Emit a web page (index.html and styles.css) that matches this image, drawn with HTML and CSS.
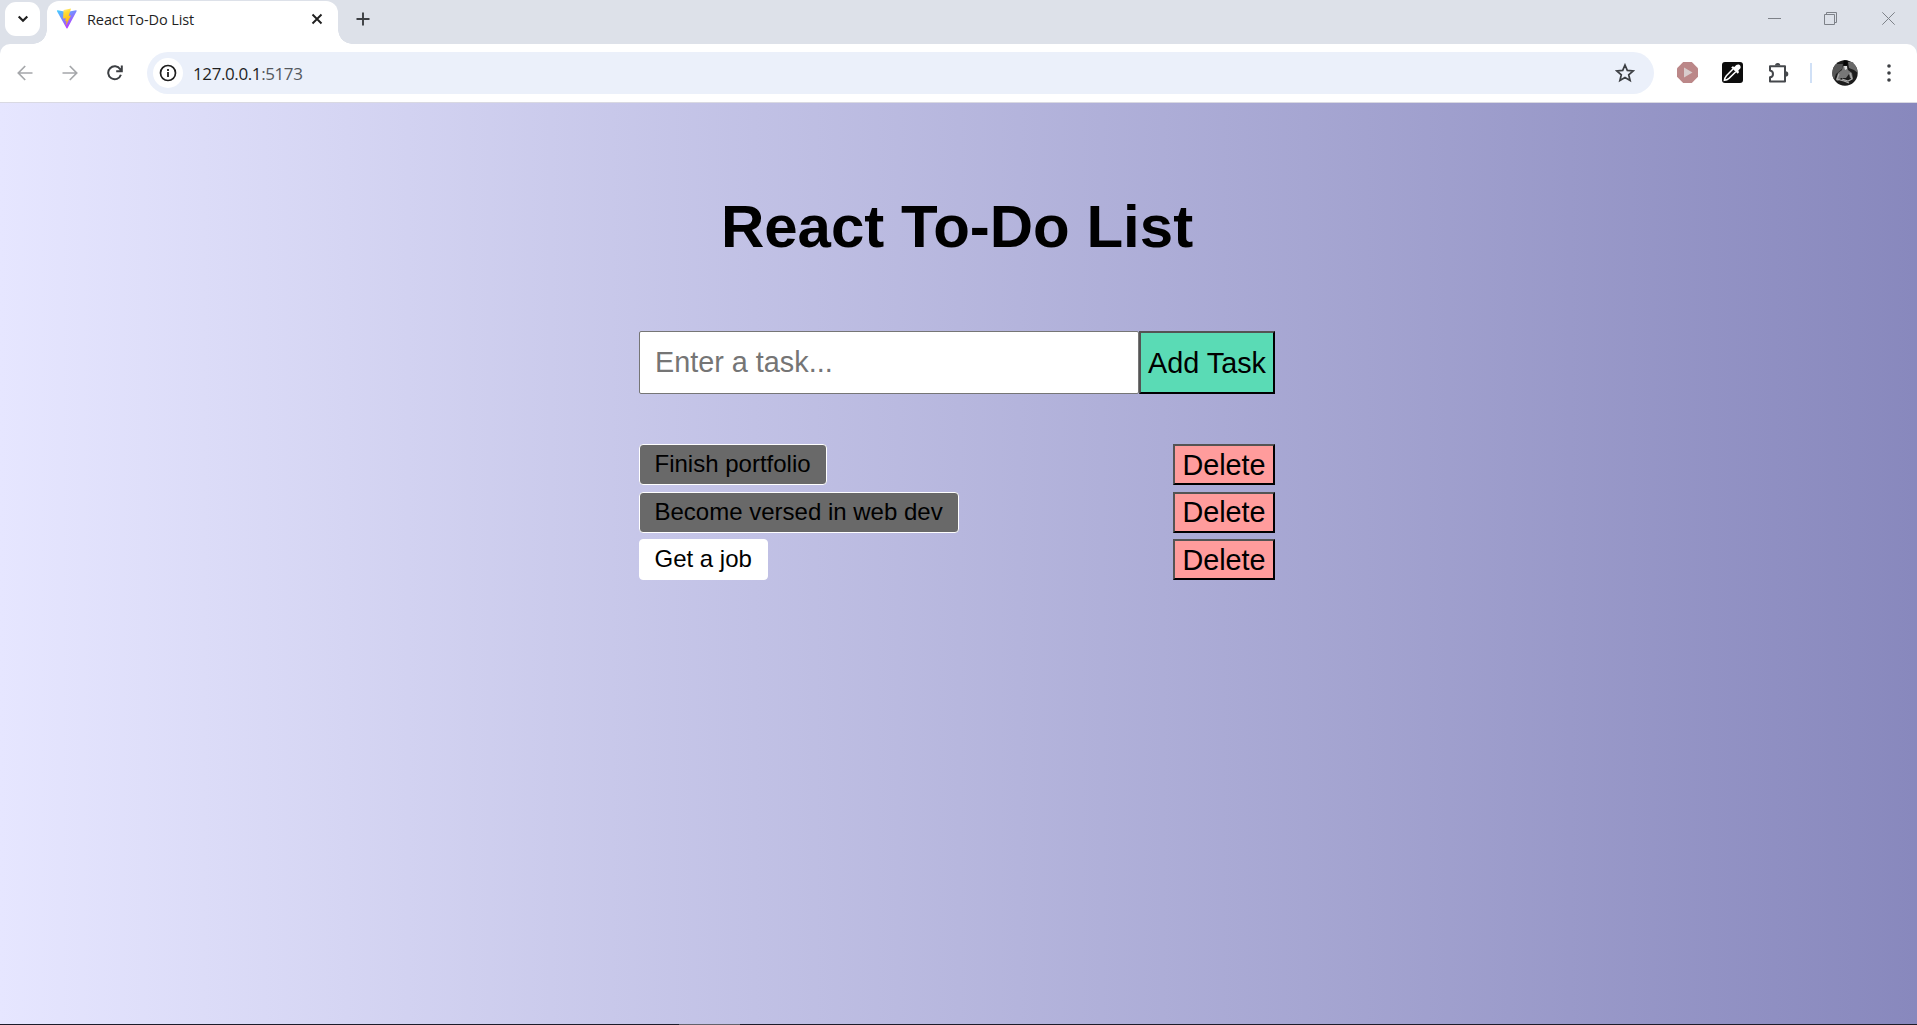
FILE: index.html
```html
<!DOCTYPE html>
<html lang="en">
<head>
<meta charset="utf-8">
<title>React To-Do List</title>
<link rel="stylesheet" href="styles.css">
</head>
<body>
<header class="tabstrip">
  <button class="tab-menu" aria-label="Search tabs">
    <svg width="12" height="8" viewBox="0 0 12 8"><path d="M1.700 1.500 6 5.700l4.300-4.200" fill="none" stroke="#1f1f1f" stroke-width="2.200"/></svg>
  </button>
  <div class="tab">
    <svg class="favicon" width="22" height="22" viewBox="0 0 22 22">
      <defs>
        <linearGradient id="v" x1="0" y1="0" x2="0.6" y2="1"><stop offset="0" stop-color="#41d1ff"/><stop offset="1" stop-color="#bd34fe"/></linearGradient>
        <linearGradient id="b" x1="0.4" y1="0" x2="0.6" y2="1"><stop offset="0" stop-color="#ffea83"/><stop offset=".2" stop-color="#ffdd35"/><stop offset="1" stop-color="#ffa800"/></linearGradient>
      </defs>
      <path d="M20.600 3.200 11.500 20.200a.6.6 0 0 1-1 0L1 3.200a.6.6 0 0 1 .7-.9L11 4l9-1.700a.6.6 0 0 1 .6.9Z" fill="url(#v)"/>
      <path d="m15 .5-7.300 1.500a.4.4 0 0 0-.2.3L7.100 10.300a.3.300 0 0 0 .3.3l2.400-.4-.6 3 1.400-.3-1 5 5.400-10.300-2.300.4L15 .5Z" fill="url(#b)"/>
    </svg>
    <span class="tab-title">React To-Do List</span>
    <svg class="tab-close" width="12" height="12" viewBox="0 0 12 12"><path d="m1.500 1.500 9 9m0-9-9 9" stroke="#1f1f1f" stroke-width="1.900"/></svg>
  </div>
  <svg class="new-tab" width="14" height="14" viewBox="0 0 14 14"><path d="M7 .5v13M.5 7h13" stroke="#3c3f43" stroke-width="1.900"/></svg>
  <div class="window-controls">
    <svg width="13" height="13" viewBox="0 0 13 13"><path d="M0 6.500h13"/></svg>
    <svg width="13" height="13" viewBox="0 0 13 13"><path d="M.5 2.500h10v10H.5zM2.500 2.500v-2h10v10h-2"/></svg>
    <svg width="13" height="13" viewBox="0 0 13 13"><path d="m.3.3 12.400 12.400M12.700.3.3 12.700"/></svg>
  </div>
</header>
<div class="toolbar-back">
<nav class="toolbar">
  <svg class="nav-icon dim" width="16" height="16" viewBox="0 0 16 16"><path d="M15.500 8H1.500M8.200 1 1.300 8l6.900 7"/></svg>
  <svg class="nav-icon dim" width="16" height="16" viewBox="0 0 16 16"><path d="M.5 8h14M7.800 1l6.900 7-6.900 7"/></svg>
  <svg class="nav-icon reload" width="16" height="16" viewBox="0 0 16 16"><path d="M13.900 9.800A6.500 6.500 0 1 1 13.200 4.200L14.500 6M14.800.5v5.700H9.200"/></svg>
  <div class="address">
    <span class="site-info"><svg width="18" height="18" viewBox="0 0 18 18"><circle cx="9" cy="9" r="7.500" fill="none" stroke="#1f1f1f" stroke-width="1.700"/><path d="M9 8v5M9 5v1.900" stroke="#1f1f1f" stroke-width="1.800"/></svg></span>
    <span class="url">127.0.0.1<span class="port">:5173</span></span>
    <svg class="star" width="20" height="20" viewBox="0 0 20 20"><path d="m10 2 2.300 5.400 5.900.5-4.500 3.900 1.400 5.700L10 14.400l-5.100 3.100 1.400-5.700-4.500-3.900 5.900-.5Z" fill="none" stroke="#3c3f43" stroke-width="1.700"/></svg>
  </div>
  <svg class="ext-play" width="21" height="21" viewBox="0 0 21 21"><path d="M6.200 0h8.600L21 6.200v8.600L14.800 21H6.200L0 14.800V6.200Z" fill="#bb8788"/><path d="M7 5.500v10l8.500-5Z" fill="#d8cccc"/></svg>
  <svg class="ext-picker" width="21" height="21" viewBox="0 0 21 21"><rect width="21" height="21" rx="3" fill="#0c0c0c"/><path d="m11 7-6.600 6.800c-1 1.200-1.700 2.600-2 4.500 1.900-.2 3.400-.9 4.600-1.900l6.800-6.600" fill="none" stroke="#fff" stroke-width="1.500"/><path d="m9.200 5.400 1.500-1.200 1.600.7 2-1.900c2.600-1.900 5.500 1 3.900 3.500l-1.900 2 .7 1.800-1.300 1.400Z" fill="#fff"/></svg>
  <svg class="ext-puzzle" width="22" height="22" viewBox="0 0 22 22"><path d="M2 4.200h15v15.300H2v-4.200c4-.6 4-6.200 0-6.800Z" fill="none" stroke="#45484c" stroke-width="2" stroke-linejoin="round"/><path d="M7 3.600a2.700 2.700 0 0 1 5.400 0M17.600 9.200a2.700 2.700 0 0 1 0 5.400" fill="#45484c"/></svg>
  <span class="divider"></span>
  <svg class="avatar" width="26" height="26" viewBox="0 0 26 26">
    <defs><clipPath id="c"><circle cx="13" cy="13" r="12.700"/></clipPath></defs>
    <g clip-path="url(#c)"><path fill="#1c1c1c" d="M0 0h26v26H0z"/><path d="M0 4h11l-1 5-6 5-2 6H0Z" fill="#555"/><path d="M16 2h10v11l-4-3-5-2Z" fill="#6a6a6a"/><path d="m11 6 4 0 1 4 4 3 1 6-3-1-1-4-3 4-5 0-3 3-2-1 2-7 4-3Z" fill="#777"/><path d="m12 6 3 0 0 3-2 1Z" fill="#ddd"/><path d="m7 14-2 5 7 2 5 2M18 13l2 6-4 2-6-2" fill="none" stroke="#aaa" stroke-width="1.300"/><path d="M11.500 0h4v5.500h-4z" fill="#050505"/></g>
  </svg>
  <svg class="kebab" width="4" height="18" viewBox="0 0 4 18"><circle cx="2" cy="2" r="1.800"/><circle cx="2" cy="9" r="1.800"/><circle cx="2" cy="16" r="1.800"/></svg>
</nav>
</div>
<main class="app">
  <h1 class="heading">React To-Do List</h1>
  <form class="task-form">
    <input class="task-input" type="text" placeholder="Enter a task...">
    <button class="add-button" type="button">Add Task</button>
  </form>
  <ul class="task-list">
    <li class="task"><span class="task-name done">Finish portfolio</span><button class="delete-button">Delete</button></li>
    <li class="task"><span class="task-name done">Become versed in web dev</span><button class="delete-button">Delete</button></li>
    <li class="task"><span class="task-name">Get a job</span><button class="delete-button">Delete</button></li>
  </ul>
</main>
<footer class="taskbar-edge"><span class="taskbar-mark"></span></footer>
</body>
</html>
```
FILE: styles.css
```css
* { box-sizing: border-box; }
body {
  margin: 0;
  height: 1025px;
  display: flex;
  flex-direction: column;
  overflow: hidden;
  font-family: "Liberation Sans", Arial, sans-serif;
}
svg { flex: none; display: block; }
button { margin: 0; }

.tabstrip {
  display: flex;
  height: 44px;
  flex: none;
  background: #dde1e9;
  padding-left: 5px;
}
.tab-menu {
  width: 35px;
  height: 34px;
  margin-top: 2px;
  padding: 0;
  border: 0;
  border-radius: 11px;
  background: #fff;
  display: flex;
  align-items: center;
  justify-content: center;
}
.tab {
  position: relative;
  width: 291px;
  height: 43px;
  margin: 1px 0 0 7px;
  padding: 0 15px 7px 9px;
  border-radius: 12px 12px 0 0;
  background: #fff;
  display: flex;
  align-items: center;
}
.tab::before, .tab::after {
  content: "";
  position: absolute;
  bottom: 0;
  width: 14px;
  height: 14px;
}
.tab::before { left: -14px; background: radial-gradient(circle at 0 0, transparent 13.500px, #fff 14px); }
.tab::after { right: -14px; background: radial-gradient(circle at 100% 0, transparent 13.500px, #fff 14px); }
.tab-title {
  flex: 1;
  margin-left: 9px;
  font: 14.500px "Open Sans", "Noto Sans", sans-serif;
  letter-spacing: -0.100px;
  color: #1f1f1f;
  white-space: nowrap;
}
.new-tab { margin: 12px 0 0 18px; }
.window-controls {
  display: flex;
  gap: 44px;
  margin: 12px 22px 0 auto;
  fill: none;
  stroke: #7d8188;
}
.window-controls svg:first-child { margin-right: -1px; }
.window-controls svg:nth-child(2) { margin-right: 1px; }

.toolbar-back { background: #dde1e9; flex: none; }
.toolbar {
  display: flex;
  align-items: center;
  height: 59px;
  padding: 0 26px 1px 17px;
  border-bottom: 1px solid #d9d9e2;
  border-radius: 10px 10px 0 0;
  background: #fff;
}
.nav-icon { fill: none; stroke: #3c3f43; stroke-width: 2; margin-right: 29px; }
.nav-icon.dim { stroke: #a5a7aa; stroke-width: 1.700; }
.nav-icon.reload { margin-right: 24px; }
.address {
  display: flex;
  align-items: center;
  width: 1507px;
  height: 42px;
  padding: 0 19px 0 6px;
  border-radius: 21px;
  background: #ebf0fa;
}
.site-info {
  width: 30px;
  height: 30px;
  border-radius: 50%;
  background: #fff;
  display: flex;
  align-items: center;
  justify-content: center;
}
.url {
  flex: 1;
  padding-top: 1px;
  margin-left: 10px;
  font: 17px "Open Sans", "Noto Sans", sans-serif;
  letter-spacing: -0.400px;
  color: #1f1f1f;
}
.port { color: #54585e; }
.ext-play { margin-left: 23px; }
.ext-picker { margin-left: 24px; }
.ext-puzzle { margin-left: 25px; }
.divider { width: 2px; height: 20px; margin-left: 20px; background: #d0e0f6; }
.avatar { margin-left: 20px; }
.kebab { margin-left: auto; fill: #3c3f43; }

.app {
  flex: 1;
  display: flex;
  flex-direction: column;
  align-items: center;
  padding-right: 3px;
  background: linear-gradient(to right, #e6e6ff, #8888bd);
}
.heading {
  margin: 89px 0 0;
  font-size: 60px;
  line-height: 70px;
}
.task-form { display: flex; width: 636px; height: 63px; margin-top: 69px; }
.task-input {
  width: 500px;
  padding: 1px 15px 2px;
  border: 1px solid #767676;
  border-radius: 2px;
  background: #fff;
  font: 28.800px "Liberation Sans", Arial, sans-serif;
}
.task-input::placeholder { color: #757575; }
.add-button, .delete-button {
  border: 2px outset #000;
  border-radius: 0;
  padding: 0;
  color: #000;
  font: 28.800px/34px "Liberation Sans", Arial, sans-serif;
}
.add-button { flex: 1; background: #5adbb5; }
.task-list {
  display: flex;
  flex-direction: column;
  gap: 6.500px;
  width: 636px;
  margin: 50px 0 0;
  padding: 0;
  list-style: none;
}
.task { display: flex; justify-content: space-between; height: 41px; }
.task-name {
  padding: 0 15px 0 14.500px;
  border: 1px solid #fff;
  border-radius: 4px;
  background: #fff;
  font-size: 24px;
  line-height: 38px;
}
.task-name.done { background: #696969; }
.delete-button { width: 102px; background: #ff9c9c; }

.taskbar-edge { height: 1px; flex: none; background: #1c1c2a; display: flex; }
.taskbar-mark { width: 61px; margin-left: 679px; background: #62626c; }
```
